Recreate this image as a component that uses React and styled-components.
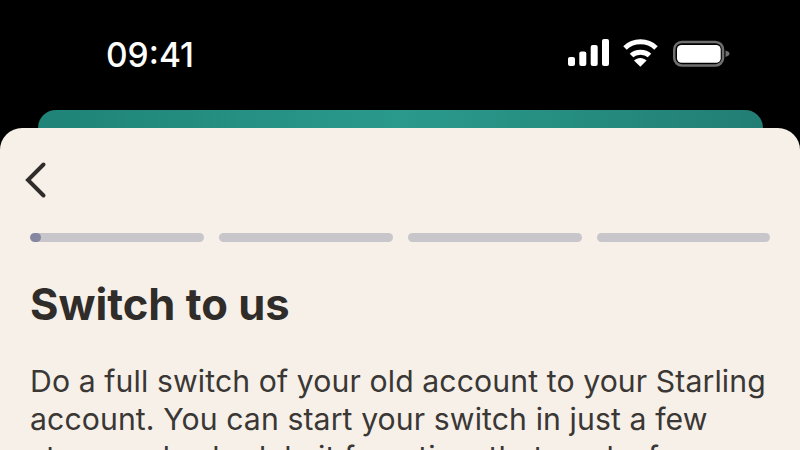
import React from "react";
import styled, { createGlobalStyle } from "styled-components";

const Global = createGlobalStyle`
  html, body {
    margin: 0;
    padding: 0;
    width: 800px;
    height: 450px;
    overflow: hidden;
    background: #000;
  }
`;

const Screen = styled.div`
  width: 800px;
  height: 450px;
  overflow: hidden;
  background: #000;
  display: flex;
  flex-direction: column;
`;

const StatusBar = styled.div`
  height: 110px;
  flex: none;
  box-sizing: border-box;
  padding: 33px 70px 0 106px;
  display: flex;
  justify-content: space-between;
  align-items: flex-start;
`;

const Time = styled.div`
  font-family: Inter, "Liberation Sans", sans-serif;
  font-size: 33.500px;
  font-weight: 500;
  line-height: 44px;
  color: #fff;
`;

const StatusIcons = styled.div`
  display: flex;
  align-items: flex-start;
  gap: 13px;
  padding-top: 6px;
`;

const PeekCard = styled.div`
  height: 18px;
  flex: none;
  margin: 0 37px 0 38px;
  border-radius: 18px 18px 0 0;
  background: linear-gradient(90deg, #1f8377 0%, #2a9a8c 50%, #227e74 100%);
`;

const Sheet = styled.div`
  flex: 1;
  background: #f6f0e9;
  border-radius: 22px 22px 0 0;
  padding: 32px 30px 0;
  display: flex;
  flex-direction: column;
  align-items: flex-start;
`;

const BackButton = styled.div`
  height: 40px;
  display: flex;
  align-items: center;
  margin-left: -7px;
`;

const Progress = styled.div`
  align-self: stretch;
  display: grid;
  grid-template-columns: 174px 174px 174px 173px;
  gap: 15px;
  margin-top: 33px;
`;

const Track = styled.div`
  height: 9px;
  border-radius: 5px;
  background: #c8c6ca;
  overflow: hidden;
`;

const Fill = styled.div`
  width: ${(props) => props.$width}px;
  height: 100%;
  border-radius: 5px;
  background: #85869f;
`;

const Title = styled.h1`
  margin: 35px 0 0;
  font-family: Inter, "Liberation Sans", sans-serif;
  font-size: 43.500px;
  font-weight: 700;
  line-height: 54px;
  color: #2f2c2a;
`;

const Body = styled.p`
  margin: 31px 0 0;
  font-family: Inter, "Liberation Sans", sans-serif;
  font-size: 30.200px;
  font-weight: 400;
  letter-spacing: 0.1px;
  line-height: 38px;
  color: #3a3734;
  white-space: nowrap;
`;

function Signal() {
  return (
    <svg width="42" height="28" viewBox="0 0 42 28" fill="#fff">
      <rect x="0" y="18" width="7" height="9" rx="2" />
      <rect x="11.300" y="12.500" width="7" height="14.500" rx="2" />
      <rect x="22.700" y="6" width="7" height="21" rx="2" />
      <rect x="34" y="0" width="7" height="27" rx="2" />
    </svg>
  );
}

function Wifi() {
  return (
    <svg width="37" height="28" viewBox="0 0 37 28" fill="none" stroke="#fff" strokeWidth="5">
      <path d="M2 9 C10.500 0.800 24.500 0.800 33 9" />
      <path d="M8.500 16.500 C13 12 22 12 26.500 16.500" />
      <path d="M17.300 27.700 L11 21.500 C14.500 18 20 18 23.600 21.500 Z" fill="#fff" stroke="none" />
    </svg>
  );
}

function Battery() {
  return (
    <svg width="57" height="28" viewBox="0 0 57 28" fill="none">
      <rect x="1.250" y="2.950" width="48.800" height="23.500" rx="7.500" stroke="#6f6f6f" strokeWidth="2.500" />
      <rect x="4" y="6" width="43.700" height="17.700" rx="4.500" fill="#fff" />
      <path d="M52.500 11.500 C55 12.300 56.500 13.300 56.500 14.700 C56.500 16.100 55 17.100 52.500 17.900 Z" fill="#6f6f6f" />
    </svg>
  );
}

function BackChevron() {
  return (
    <svg width="26" height="38" viewBox="0 0 26 38" fill="none">
      <path d="M20.500 3.500 L5 19 L20.500 34.500" stroke="#2f2c2a" strokeWidth="4" strokeLinecap="round" strokeLinejoin="miter" />
    </svg>
  );
}

export default function App() {
  return (
    <>
      <Global />
      <Screen>
        <StatusBar>
          <Time>09:41</Time>
          <StatusIcons>
            <Signal />
            <Wifi />
            <Battery />
          </StatusIcons>
        </StatusBar>
        <PeekCard />
        <Sheet>
          <BackButton>
            <BackChevron />
          </BackButton>
          <Progress>
            <Track>
              <Fill $width={11} />
            </Track>
            <Track />
            <Track />
            <Track />
          </Progress>
          <Title>Switch to us</Title>
          <Body>
            Do a full switch of your old account to your Starling
            <br />
            account. You can start your switch in just a few
            <br />
            steps and schedule it for a time that works for you.
          </Body>
        </Sheet>
      </Screen>
    </>
  );
}
